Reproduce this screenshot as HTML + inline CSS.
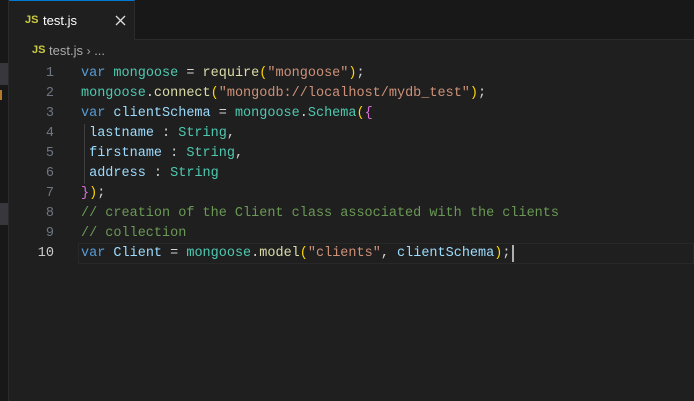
<!DOCTYPE html>
<html><head><meta charset="utf-8"><style>
html,body{margin:0;padding:0;width:694px;height:401px;overflow:hidden;background:#1f1f1f;font-family:"Liberation Sans",sans-serif}
.side{position:absolute;left:0;top:0;width:8px;height:401px;background:#181818;border-right:1px solid #2b2b2b}
.tabbar{position:absolute;left:9px;top:0;right:0;height:39px;background:#181818;border-bottom:1px solid #2b2b2b}
.tab{position:absolute;left:9px;top:0;width:126px;height:40px;background:#1f1f1f;border-top:1px solid #0078d4;border-right:1px solid #2b2b2b;box-sizing:border-box}
.js{color:#cbcb41;font-weight:bold;font-size:11px;position:absolute}
.code{position:absolute;left:0;top:64px;font-family:"Liberation Mono",monospace;font-size:13.5px;line-height:20px;white-space:pre}
.ln{position:absolute;left:0;width:54px;text-align:right;color:#6e7681}
.l{position:absolute;left:81px;color:#d4d4d4}
.k{color:#569cd6}.v{color:#9cdcfe}.f{color:#dcdcaa}.s{color:#ce9178}.c{color:#6a9955}.y{color:#ffd700}.p{color:#da70d6}.t{color:#4ec9b0}.b{color:#179fff}
</style></head><body>
<div class="side"><div style="position:absolute;top:63px;width:8px;height:22px;background:#37373d"></div><div style="position:absolute;top:90px;width:2px;height:10px;background:#b5792a"></div><div style="position:absolute;top:203px;width:8px;height:22px;background:#37373d"></div></div>
<div class="tabbar"></div>
<div class="tab"><span class="js" style="left:16px;top:13px">JS</span><span style="position:absolute;left:34px;top:12px;color:#fff;font-size:13px">test.js</span><svg style="position:absolute;left:106px;top:14px" width="11" height="11" viewBox="0 0 11 11"><path d="M1 1L10 10M10 1L1 10" stroke="#ddd" stroke-width="1.3"/></svg></div>
<div style="position:absolute;left:32px;top:43px;font-size:13px;color:#a9a9a9"><span class="js" style="left:0;top:1px">JS</span><span style="position:absolute;left:17px;white-space:nowrap">test.js <span style="font-size:12px">›</span> ...</span></div>
<div style="position:absolute;left:78px;top:243px;right:0;height:19px;border:1px solid #282828"></div>
<div class="code">
<div class="ln" style="top:0">1</div><div class="ln" style="top:20px">2</div><div class="ln" style="top:40px">3</div><div class="ln" style="top:60px">4</div><div class="ln" style="top:80px">5</div><div class="ln" style="top:100px">6</div><div class="ln" style="top:120px">7</div><div class="ln" style="top:140px">8</div><div class="ln" style="top:160px">9</div><div class="ln" style="top:180px;color:#ccc">10</div>
<div class="l" style="top:0"><span class="k">var</span> <span class="t">mongoose</span> = <span class="f">require</span><span class="y">(</span><span class="s">"mongoose"</span><span class="y">)</span>;</div>
<div class="l" style="top:20px"><span class="t">mongoose</span>.<span class="f">connect</span><span class="y">(</span><span class="s">"mongodb://localhost/mydb_test"</span><span class="y">)</span>;</div>
<div class="l" style="top:40px"><span class="k">var</span> <span class="v">clientSchema</span> = <span class="t">mongoose</span>.<span class="t">Schema</span><span class="y">(</span><span class="p">{</span></div>
<div class="l" style="top:60px"> <span class="v">lastname</span> : <span class="t">String</span>,</div>
<div class="l" style="top:80px"> <span class="v">firstname</span> : <span class="t">String</span>,</div>
<div class="l" style="top:100px"> <span class="v">address</span> : <span class="t">String</span></div>
<div class="l" style="top:120px"><span class="p">}</span><span class="y">)</span>;</div>
<div class="l" style="top:140px"><span class="c">// creation of the Client class associated with the clients</span></div>
<div class="l" style="top:160px"><span class="c">// collection</span></div>
<div class="l" style="top:180px"><span class="k">var</span> <span class="v">Client</span> = <span class="t">mongoose</span>.<span class="f">model</span><span class="y">(</span><span class="s">"clients"</span>, <span class="v">clientSchema</span><span class="y">)</span>;</div>
</div>
<div style="position:absolute;left:84px;top:124px;width:1px;height:60px;background:#404040"></div>
<div style="position:absolute;left:512px;top:245px;width:2px;height:17px;background:#aeafad"></div>
</body></html>
